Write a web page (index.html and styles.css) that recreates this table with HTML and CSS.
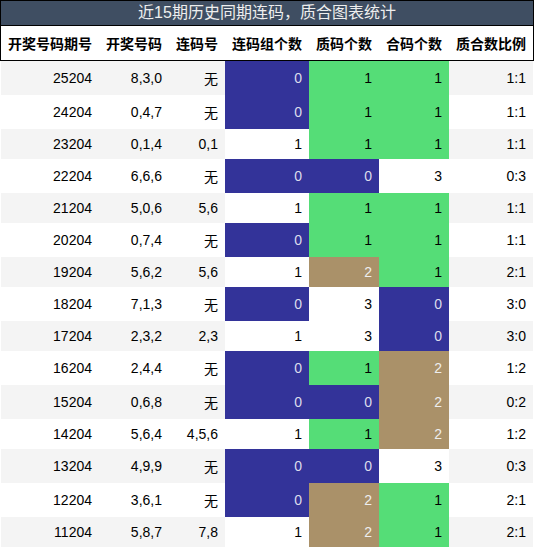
FILE: index.html
```html
<!DOCTYPE html>
<html lang="zh">
<head>
    <meta charset="UTF-8">
    <meta name="viewport" content="width=device-width, initial-scale=1.0">
    <title>连码质合统计</title>
    <link rel="stylesheet" href="styles.css">
</head>
<body>
    <div class="chart">
        <div class="chart-title">近15期历史同期连码，质合图表统计</div>
        <table class="stats">
            <thead>
                <tr>
                    <th>开奖号码期号</th>
                    <th>开奖号码</th>
                    <th>连码号</th>
                    <th>连码组个数</th>
                    <th>质码个数</th>
                    <th>合码个数</th>
                    <th>质合数比例</th>
                </tr>
            </thead>
            <tbody>
                <tr><td>25204</td><td>8,3,0</td><td>无</td><td class="num zero">0</td><td class="num one">1</td><td class="num one">1</td><td>1:1</td></tr>
                <tr><td>24204</td><td>0,4,7</td><td>无</td><td class="num zero">0</td><td class="num one">1</td><td class="num one">1</td><td>1:1</td></tr>
                <tr><td>23204</td><td>0,1,4</td><td>0,1</td><td class="num">1</td><td class="num one">1</td><td class="num one">1</td><td>1:1</td></tr>
                <tr><td>22204</td><td>6,6,6</td><td>无</td><td class="num zero">0</td><td class="num zero">0</td><td class="num">3</td><td>0:3</td></tr>
                <tr><td>21204</td><td>5,0,6</td><td>5,6</td><td class="num">1</td><td class="num one">1</td><td class="num one">1</td><td>1:1</td></tr>
                <tr><td>20204</td><td>0,7,4</td><td>无</td><td class="num zero">0</td><td class="num one">1</td><td class="num one">1</td><td>1:1</td></tr>
                <tr><td>19204</td><td>5,6,2</td><td>5,6</td><td class="num">1</td><td class="num two">2</td><td class="num one">1</td><td>2:1</td></tr>
                <tr><td>18204</td><td>7,1,3</td><td>无</td><td class="num zero">0</td><td class="num">3</td><td class="num zero">0</td><td>3:0</td></tr>
                <tr><td>17204</td><td>2,3,2</td><td>2,3</td><td class="num">1</td><td class="num">3</td><td class="num zero">0</td><td>3:0</td></tr>
                <tr><td>16204</td><td>2,4,4</td><td>无</td><td class="num zero">0</td><td class="num one">1</td><td class="num two">2</td><td>1:2</td></tr>
                <tr><td>15204</td><td>0,6,8</td><td>无</td><td class="num zero">0</td><td class="num zero">0</td><td class="num two">2</td><td>0:2</td></tr>
                <tr><td>14204</td><td>5,6,4</td><td>4,5,6</td><td class="num">1</td><td class="num one">1</td><td class="num two">2</td><td>1:2</td></tr>
                <tr><td>13204</td><td>4,9,9</td><td>无</td><td class="num zero">0</td><td class="num zero">0</td><td class="num">3</td><td>0:3</td></tr>
                <tr><td>12204</td><td>3,6,1</td><td>无</td><td class="num zero">0</td><td class="num two">2</td><td class="num one">1</td><td>2:1</td></tr>
                <tr><td>11204</td><td>5,8,7</td><td>7,8</td><td class="num">1</td><td class="num two">2</td><td class="num one">1</td><td>2:1</td></tr>
            </tbody>
        </table>
    </div>
</body>
</html>
```

FILE: styles.css
```css
body {
    margin: 0;
    background: #fff;
    font-family: "Liberation Sans", "Noto Sans CJK SC", sans-serif;
    font-size: 14px;
    color: #000;
}
.chart {
    width: 534px;
}
.chart-title {
    height: 24px;
    line-height: 24px;
    border: 1px solid #000;
    background: #3f4e62;
    color: #eeeeee;
    font-size: 16px;
    text-align: center;
}
.stats {
    width: 100%;
    border-spacing: 0;
}
.stats th {
    padding: 7px;
    font-weight: bold;
    white-space: nowrap;
    border-bottom: 1px solid #000;
}
.stats th:first-child {
    border-left: 1px solid #000;
}
.stats th:last-child {
    border-right: 1px solid #000;
}
.stats td {
    padding: 7px;
    text-align: right;
    white-space: nowrap;
}
.stats td:first-child {
    border-left: 1px solid #fff;
}
.stats td:last-child {
    border-right: 1px solid #fff;
}
.stats tbody tr:nth-child(odd) td {
    background: #f4f4f4;
}
.stats tbody tr td.num {
    background: #fff;
}
.stats tbody tr td.zero {
    background: #333399;
    color: #dcdcec;
}
.stats tbody tr td.one {
    background: #55dd77;
    color: #000;
}
.stats tbody tr td.two {
    background: #aa9169;
    color: #eeeeee;
}
```
